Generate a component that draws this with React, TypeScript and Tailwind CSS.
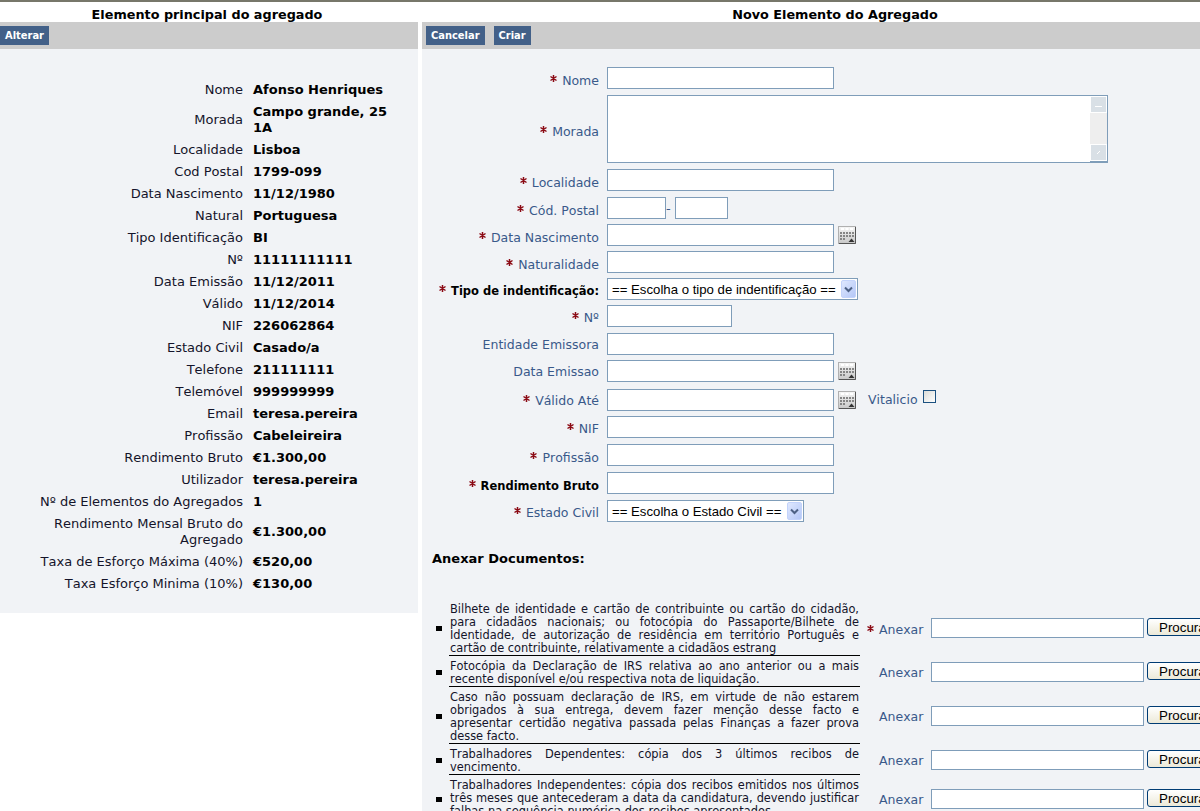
import React from "react";

const Star = () => (
  <svg width="7" height="7" viewBox="0 0 7 7" className="mt-[2px] inline-block shrink-0">
    <path d="M3.5 0V7M0.5 1.5L6.5 5.5M6.5 1.5L0.5 5.5" stroke="#8b0a14" strokeWidth="1.5" />
  </svg>
);

const Cal = () => (
  <svg width="18" height="18" viewBox="0 0 18 18" className="shrink-0">
    <defs>
      <linearGradient id="cg" x1="0" y1="0" x2="0" y2="1">
        <stop offset="0" stopColor="#f6f6f6" />
        <stop offset="1" stopColor="#c8c8c8" />
      </linearGradient>
    </defs>
    <rect x="0.5" y="0.5" width="17" height="17" fill="url(#cg)" stroke="#b0b0b0" />
    <path d="M17.5 1V17.5H1" fill="none" stroke="#555" />
    <rect x="3" y="2" width="3" height="2" fill="#fff" />
    <rect x="7.5" y="2" width="3" height="2" fill="#fff" />
    <rect x="12" y="2" width="3" height="2" fill="#fff" />
    {[2, 5, 8, 11, 14].map((x) =>
      [6, 9].map((y) => <rect key={x + "-" + y} x={x} y={y} width="2" height="2" fill="#858585" />)
    )}
    <rect x="2" y="12" width="2" height="2" fill="#858585" />
    <rect x="5" y="12" width="2" height="2" fill="#858585" />
    <path d="M10.5 16L13.5 12.5L16.5 16Z" fill="#333" />
  </svg>
);

const Chevron = () => (
  <span className="flex h-[18px] w-[15px] shrink-0 items-center justify-center rounded-[2px] border border-[#c3d3fb] bg-gradient-to-br from-[#dfe8fe] to-[#b4c7f7]">
    <svg width="9" height="7" viewBox="0 0 9 7">
      <path d="M1 1.5L4.5 5L8 1.5" fill="none" stroke="#4d6185" strokeWidth="2" />
    </svg>
  </span>
);

const inputCls = "h-[22px] border border-[#7f9db9] bg-white shrink-0";

const Sel = ({ text, w }: { text: string; w: string }) => (
  <div className={`flex h-[22px] shrink-0 items-center justify-between border border-[#7f9db9] bg-white pl-[4px] pr-[1px] font-['Liberation_Sans',sans-serif] text-[13.2px] text-black ${w}`}>
    <span className="whitespace-nowrap pt-[1px]">{text}</span>
    <Chevron />
  </div>
);

const Label = ({ t, req, bold, pt = "pt-[6px]" }: { t: string; req?: boolean; bold?: boolean; pt?: string }) => (
  <div className={`flex w-[177px] shrink-0 items-start justify-end gap-[5px] whitespace-nowrap leading-[16px] ${pt} ${bold ? "text-[11.5px] font-bold text-black" : "text-[12.5px] text-[#39598a]"}`}>
    {req && <Star />}
    <span>{t}</span>
  </div>
);

const left: [string, string][] = [
  ["Nome", "Afonso Henriques"],
  ["Morada", "Campo grande, 25 1A"],
  ["Localidade", "Lisboa"],
  ["Cod Postal", "1799-099"],
  ["Data Nascimento", "11/12/1980"],
  ["Natural", "Portuguesa"],
  ["Tipo Identificação", "BI"],
  ["Nº", "11111111111"],
  ["Data Emissão", "11/12/2011"],
  ["Válido", "11/12/2014"],
  ["NIF", "226062864"],
  ["Estado Civil", "Casado/a"],
  ["Telefone", "211111111"],
  ["Telemóvel", "999999999"],
  ["Email", "teresa.pereira"],
  ["Profissão", "Cabeleireira"],
  ["Rendimento Bruto", "€1.300,00"],
  ["Utilizador", "teresa.pereira"],
  ["Nº de Elementos do Agregados", "1"],
  ["Rendimento Mensal Bruto do Agregado", "€1.300,00"],
  ["Taxa de Esforço Máxima (40%)", "€520,00"],
  ["Taxa Esforço Minima (10%)", "€130,00"],
];

const docs: { t: string; req?: boolean; cls: string }[] = [
  {
    t: "Bilhete de identidade e cartão de contribuinte ou cartão do cidadão, para cidadãos nacionais; ou fotocópia do Passaporte/Bilhete de Identidade, de autorização de residência em território Português e cartão de contribuinte, relativamente a cidadãos estrang",
    req: true,
    cls: "",
  },
  { t: "Fotocópia da Declaração de IRS relativa ao ano anterior ou a mais recente disponível e/ou respectiva nota de liquidação.", cls: "" },
  { t: "Caso não possuam declaração de IRS, em virtude de não estarem obrigados à sua entrega, devem fazer menção desse facto e apresentar certidão negativa passada pelas Finanças a fazer prova desse facto.", cls: "" },
  { t: "Trabalhadores Dependentes: cópia dos 3 últimos recibos de vencimento.", cls: "" },
  { t: "Trabalhadores Independentes: cópia dos recibos emitidos nos últimos três meses que antecederam a data da candidatura, devendo justificar falhas na sequência numérica dos recibos apresentados.", cls: "pb-[2px]" },
];

const Btn = ({ t }: { t: string }) => (
  <button className="flex h-[19px] items-center bg-[#426088] px-[5px] pt-[1px] font-['DejaVu_Sans_Condensed','DejaVu_Sans',sans-serif] text-[11px] font-bold text-white">{t}</button>
);

export default function App() {
  return (
    <div className="h-[811px] w-[1200px] overflow-hidden border-t-2 border-[#77776a] bg-white font-['DejaVu_Sans',sans-serif] text-[13px] text-[#14142a] [font-kerning:none]">
      <div className="flex">
        <div className="w-[418px] shrink-0">
          <h2 className="h-[20px] pr-[4px] text-center text-[12.8px] font-bold leading-[25px] text-black">Elemento principal do agregado</h2>
          <div className="flex h-[27px] items-start bg-[#cccccc] pt-[4px]">
            <Btn t="Alterar" />
          </div>
          <div className="bg-[#f1f3f6] pb-[18px] pt-[30px]">
            {left.map(([k, v]) => (
              <div key={k} className="flex items-center py-[3px] leading-[16px]">
                <div className="w-[243px] shrink-0 pl-[30px] text-right">{k}</div>
                <div className="ml-[10px] w-[145px] font-bold text-black">{v}</div>
              </div>
            ))}
          </div>
        </div>

        <div className="ml-[4px] flex-1 overflow-hidden">
          <h2 className="h-[20px] pl-[48px] text-center text-[12.8px] font-bold leading-[25px] text-black">Novo Elemento do Agregado</h2>
          <div className="flex h-[27px] items-start gap-[9px] bg-[#cccccc] pl-[4px] pt-[4px]">
            <Btn t="Cancelar" />
            <Btn t="Criar" />
          </div>
          <div className="h-[800px] bg-[#f1f3f6] pt-[18px]">
            <div className="flex gap-[8px]">
              <Label t="Nome" req />
              <div className={`${inputCls} w-[227px]`} />
            </div>
            <div className="mt-[6px] flex items-center gap-[8px]">
              <Label t="Morada" req />
              <div className="flex h-[68px] w-[501px] shrink-0 border border-[#7f9db9] bg-white">
                <div className="flex-1" />
                <div className="flex w-[17px] flex-col justify-between border-b border-b-[#7f9db9] bg-[#eeeeee]">
                  <div className="flex h-[17px] items-center justify-center border border-white bg-[#d9e0e6]">
                    <span className="mt-[3px] h-px w-[7px] bg-white" />
                  </div>
                  <div className="flex h-[17px] items-center justify-center border border-white bg-[#d9e0e6]">
                    <svg width="5" height="5" viewBox="0 0 5 5"><path d="M1 4L4 1" stroke="#fff" /></svg>
                  </div>
                </div>
              </div>
            </div>
            <div className="mt-[6px] flex gap-[8px]">
              <Label t="Localidade" req />
              <div className={`${inputCls} w-[227px]`} />
            </div>
            <div className="mt-[6px] flex gap-[8px]">
              <Label t="Cód. Postal" req />
              <div className="flex">
                <div className={`${inputCls} w-[59px]`} />
                <span className="w-[9px] pt-[4px] text-left leading-[16px] text-[#39598a]">-</span>
                <div className={`${inputCls} w-[53px]`} />
              </div>
            </div>
            <div className="mt-[5px] flex gap-[8px]">
              <Label t="Data Nascimento" req />
              <div className={`${inputCls} w-[227px]`} />
              <div className="-ml-[4px] pt-[2px]"><Cal /></div>
            </div>
            <div className="mt-[5px] flex gap-[8px]">
              <Label t="Naturalidade" req />
              <div className={`${inputCls} w-[227px]`} />
            </div>
            <div className="mt-[5px] flex gap-[8px]">
              <Label t="Tipo de indentificação:" req bold pt="pt-[5px]" />
              <Sel text="== Escolha o tipo de indentificação ==" w="w-[251px]" />
            </div>
            <div className="mt-[5px] flex gap-[8px]">
              <Label t="Nº" req pt="pt-[5px]" />
              <div className={`${inputCls} w-[125px]`} />
            </div>
            <div className="mt-[6px] flex gap-[8px]">
              <Label t="Entidade Emissora" pt="pt-[4px]" />
              <div className={`${inputCls} w-[227px]`} />
            </div>
            <div className="mt-[5px] flex gap-[8px]">
              <Label t="Data Emissao" pt="pt-[4px]" />
              <div className={`${inputCls} w-[227px]`} />
              <div className="-ml-[4px] pt-[2px]"><Cal /></div>
            </div>
            <div className="mt-[7px] flex gap-[8px]">
              <Label t="Válido Até" req pt="pt-[4px]" />
              <div className={`${inputCls} w-[227px]`} />
              <div className="-ml-[4px] pt-[2px]"><Cal /></div>
              <span className="ml-[4px] w-[55px] shrink-0 text-[12.5px] leading-[22px] text-[#39598a]">Vitalicio</span>
              <span className="-ml-[8px] mt-[1px] h-[13px] w-[13px] border border-[#1c5180] bg-gradient-to-br from-[#dcdcd7] to-white" />
            </div>
            <div className="mt-[5px] flex gap-[8px]">
              <Label t="NIF" req pt="pt-[5px]" />
              <div className={`${inputCls} w-[227px]`} />
            </div>
            <div className="mt-[6px] flex gap-[8px]">
              <Label t="Profissão" req />
              <div className={`${inputCls} w-[227px]`} />
            </div>
            <div className="mt-[6px] flex gap-[8px]">
              <Label t="Rendimento Bruto" req bold />
              <div className={`${inputCls} w-[227px]`} />
            </div>
            <div className="mt-[6px] flex gap-[8px]">
              <Label t="Estado Civil" req pt="pt-[5px]" />
              <Sel text="== Escolha o Estado Civil ==" w="w-[197px]" />
            </div>
            <h3 className="ml-[10px] mt-[29px] h-[16px] font-bold leading-[16px] text-black">Anexar Documentos:</h3>
            <div className="mt-[32px]">
              {docs.map((d, i) => (
                <div key={i} className="flex items-center">
                  <span className="ml-[14px] mr-[7px] mt-[2px] h-[5px] w-[6px] shrink-0 bg-black" />
                  <div className={`w-[411px] shrink-0 border-b border-black px-[1px] pt-[4px] text-justify text-[11.4px] leading-[13px] text-[#14142a] ${d.cls}`}>
                    {d.t}
                  </div>
                  <div className="ml-[7px] flex w-[12px] shrink-0 justify-start">{d.req && <Star />}</div>
                  <span className={`w-[52px] shrink-0 text-[12.5px] leading-[20px] text-[#39598a] ${d.req ? "pt-[5px]" : "pt-[3px]"}`}>Anexar</span>
                  <div className="mt-[1px] h-[20px] w-[213px] shrink-0 border border-[#7f9db9] bg-white" />
                  <button className="-mt-[1px] ml-[3px] h-[18px] w-[70px] shrink-0 whitespace-nowrap rounded-[3px] border border-[#003c74] bg-gradient-to-b from-white to-[#ece9d8] pl-[11px] pt-[2px] text-left font-['Liberation_Sans',sans-serif] text-[13.33px] leading-[14px] text-black">Procurar</button>
                </div>
              ))}
            </div>
          </div>
        </div>
      </div>
    </div>
  );
}
